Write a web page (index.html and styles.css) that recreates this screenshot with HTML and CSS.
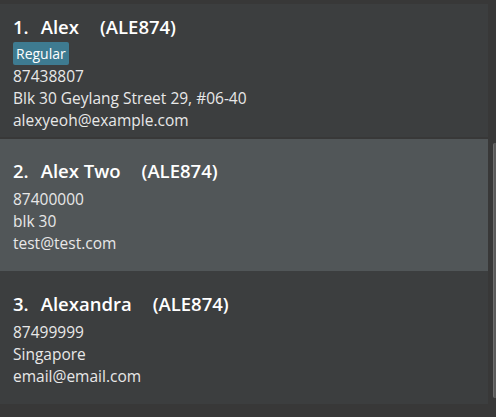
FILE: index.html
```html
<!DOCTYPE html>
<html>
<head>
<meta charset="utf-8">
<link rel="stylesheet" href="styles.css">
</head>
<body>
<div class="view">
  <div class="list">
    <div class="cell even first">
      <div class="card">
        <div class="title"><span class="id">1.</span><span class="name">Alex</span><span class="code">(ALE874)</span></div>
        <div class="tags"><span class="tag">Regular</span></div>
        <div class="line">87438807</div>
        <div class="line">Blk 30 Geylang Street 29, #06-40</div>
        <div class="line">alexyeoh@example.com</div>
      </div>
    </div>
    <div class="cell odd second">
      <div class="card">
        <div class="title"><span class="id">2.</span><span class="name">Alex Two</span><span class="code">(ALE874)</span></div>
        <div class="line">87400000</div>
        <div class="line">blk 30</div>
        <div class="line">test@test.com</div>
      </div>
    </div>
    <div class="cell even third">
      <div class="card">
        <div class="title"><span class="id">3.</span><span class="name">Alexandra</span><span class="code">(ALE874)</span></div>
        <div class="line">87499999</div>
        <div class="line">Singapore</div>
        <div class="line">email@email.com</div>
      </div>
    </div>
  </div>
  <div class="scrollbar"><div class="thumb"></div></div>
</div>
</body>
</html>
```
FILE: styles.css
```css
html, body {
  margin: 0;
  padding: 0;
  background: #383838;
  width: 496px;
  height: 417px;
  overflow: hidden;
  font-family: "Open Sans", "Noto Sans", sans-serif;
}
.view {
  display: flex;
  height: 417px;
}
.list {
  width: 488px;
  padding-top: 4px;
  display: flex;
  flex-direction: column;
}
.cell {
  display: flex;
  align-items: flex-start;
  box-sizing: border-box;
  padding-left: 13px;
}
.cell.first {
  height: 133px;
  margin-bottom: 2px;
  padding-top: 10px;
}
.cell.second {
  height: 132px;
  padding-top: 19px;
}
.cell.third {
  height: 133px;
  padding-top: 20px;
}
.cell.even { background: #3c3e3f; }
.cell.odd { background: #515658; }
.card {
  display: flex;
  flex-direction: column;
}
.title {
  font-weight: 600;
  font-size: 18.5px;
  color: #ffffff;
  line-height: 26px;
  display: flex;
  margin-bottom: 4px;
}
.id { margin-right: 12px; }
.name { margin-right: 21px; }
.tags { display: flex; margin: -2px 0 0; }
.tag {
  background: #3e7b91;
  color: #ffffff;
  font-size: 14px;
  line-height: 23px;
  padding: 0 3px;
  border-radius: 2px;
}
.line {
  font-size: 15.5px;
  color: #e8e8e8;
  line-height: 22px;
}
.scrollbar {
  flex: 1;
  position: relative;
}
.thumb {
  position: absolute;
  left: 5px;
  right: 0;
  top: 143px;
  height: 255px;
  background: #5a5a5a;
  border-left: 1px solid #6e6e6e;
  border-radius: 2px 0 0 2px;
}
```
